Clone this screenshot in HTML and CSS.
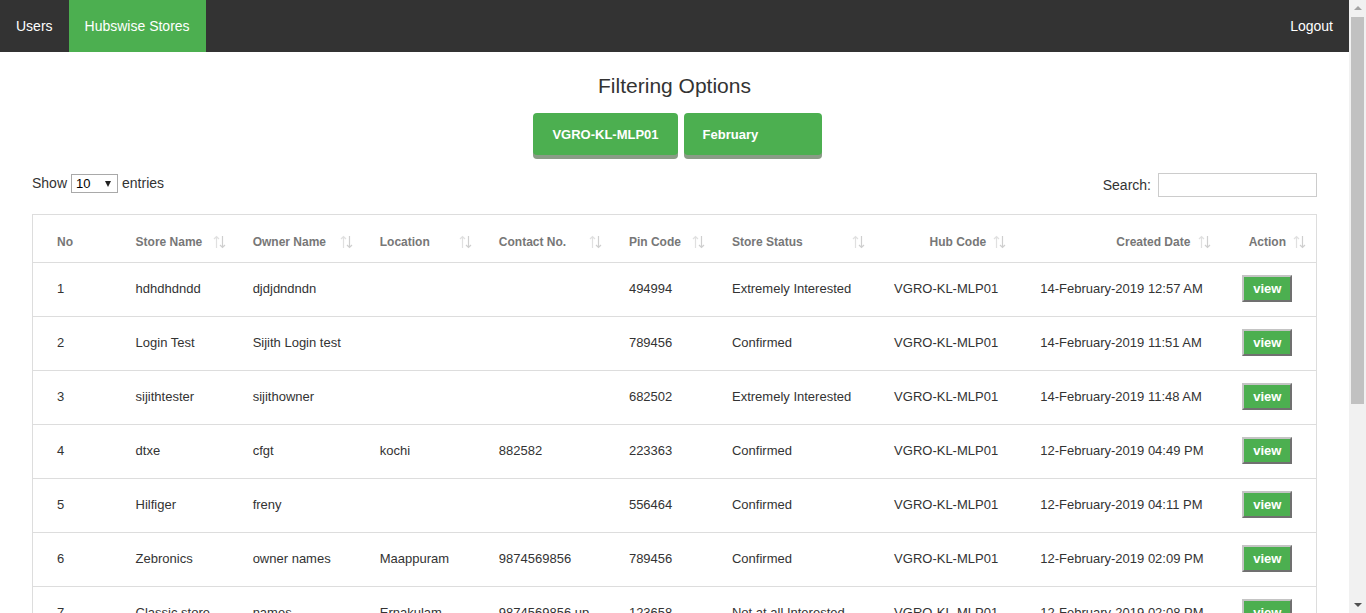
FILE: index.html
```html
<!DOCTYPE html>
<html lang="en">
<head>
<meta charset="utf-8">
<title>Hubswise Stores</title>
<link rel="stylesheet" href="styles.css">
</head>
<body>
<div class="viewport">
<nav class="topnav">
  <a class="nav-link" href="#">Users</a>
  <a class="nav-link active" href="#">Hubswise Stores</a>
  <a class="nav-link logout" href="#">Logout</a>
</nav>

<main class="page">
  <h2 class="title">Filtering Options</h2>
  <div class="filters">
    <button class="filter-btn">VGRO-KL-MLP01</button>
    <button class="filter-btn month">February</button>
  </div>

  <div class="controls">
    <label class="length">Show <span class="select-wrap"><select class="entries"><option>10</option><option>25</option><option>50</option></select></span> entries</label>
    <label class="search">Search: <input type="text" class="search-input"></label>
  </div>

  <table class="stores">
    <colgroup>
      <col class="c-no"><col class="c-store"><col class="c-owner"><col class="c-loc"><col class="c-contact"><col class="c-pin"><col class="c-status"><col class="c-hub"><col class="c-date"><col class="c-action">
    </colgroup>
    <thead>
      <tr>
        <th class="first plain">No</th>
        <th>Store Name<svg class="sort" viewBox="0 0 13 14" width="13" height="14"><path d="M3.5 1.5V13M1 4L3.5 1.5L6 4" class="up"/><path d="M9.5 1V12.5M7 10L9.5 12.5L12 10" class="down"/></svg></th>
        <th>Owner Name<svg class="sort" viewBox="0 0 13 14" width="13" height="14"><path d="M3.5 1.5V13M1 4L3.5 1.5L6 4" class="up"/><path d="M9.5 1V12.5M7 10L9.5 12.5L12 10" class="down"/></svg></th>
        <th>Location<svg class="sort" viewBox="0 0 13 14" width="13" height="14"><path d="M3.5 1.5V13M1 4L3.5 1.5L6 4" class="up"/><path d="M9.5 1V12.5M7 10L9.5 12.5L12 10" class="down"/></svg></th>
        <th>Contact No.<svg class="sort" viewBox="0 0 13 14" width="13" height="14"><path d="M3.5 1.5V13M1 4L3.5 1.5L6 4" class="up"/><path d="M9.5 1V12.5M7 10L9.5 12.5L12 10" class="down"/></svg></th>
        <th>Pin Code<svg class="sort" viewBox="0 0 13 14" width="13" height="14"><path d="M3.5 1.5V13M1 4L3.5 1.5L6 4" class="up"/><path d="M9.5 1V12.5M7 10L9.5 12.5L12 10" class="down"/></svg></th>
        <th class="h-status">Store Status<svg class="sort" viewBox="0 0 13 14" width="13" height="14"><path d="M3.5 1.5V13M1 4L3.5 1.5L6 4" class="up"/><path d="M9.5 1V12.5M7 10L9.5 12.5L12 10" class="down"/></svg></th>
        <th class="right h-hub">Hub Code<svg class="sort" viewBox="0 0 13 14" width="13" height="14"><path d="M3.5 1.5V13M1 4L3.5 1.5L6 4" class="up"/><path d="M9.5 1V12.5M7 10L9.5 12.5L12 10" class="down"/></svg></th>
        <th class="right h-date">Created Date<svg class="sort" viewBox="0 0 13 14" width="13" height="14"><path d="M3.5 1.5V13M1 4L3.5 1.5L6 4" class="up"/><path d="M9.5 1V12.5M7 10L9.5 12.5L12 10" class="down"/></svg></th>
        <th class="right h-action">Action<svg class="sort" viewBox="0 0 13 14" width="13" height="14"><path d="M3.5 1.5V13M1 4L3.5 1.5L6 4" class="up"/><path d="M9.5 1V12.5M7 10L9.5 12.5L12 10" class="down"/></svg></th>
      </tr>
    </thead>
    <tbody>
      <tr><td class="first">1</td><td>hdhdhdndd</td><td>djdjdndndn</td><td></td><td></td><td>494994</td><td>Extremely Interested</td><td>VGRO-KL-MLP01</td><td>14-February-2019 12:57 AM</td><td><button class="view-btn">view</button></td></tr>
      <tr><td class="first">2</td><td>Login Test</td><td>Sijith Login test</td><td></td><td></td><td>789456</td><td>Confirmed</td><td>VGRO-KL-MLP01</td><td>14-February-2019 11:51 AM</td><td><button class="view-btn">view</button></td></tr>
      <tr><td class="first">3</td><td>sijithtester</td><td>sijithowner</td><td></td><td></td><td>682502</td><td>Extremely Interested</td><td>VGRO-KL-MLP01</td><td>14-February-2019 11:48 AM</td><td><button class="view-btn">view</button></td></tr>
      <tr><td class="first">4</td><td>dtxe</td><td>cfgt</td><td>kochi</td><td>882582</td><td>223363</td><td>Confirmed</td><td>VGRO-KL-MLP01</td><td>12-February-2019 04:49 PM</td><td><button class="view-btn">view</button></td></tr>
      <tr><td class="first">5</td><td>Hilfiger</td><td>freny</td><td></td><td></td><td>556464</td><td>Confirmed</td><td>VGRO-KL-MLP01</td><td>12-February-2019 04:11 PM</td><td><button class="view-btn">view</button></td></tr>
      <tr><td class="first">6</td><td>Zebronics</td><td>owner names</td><td>Maappuram</td><td>9874569856</td><td>789456</td><td>Confirmed</td><td>VGRO-KL-MLP01</td><td>12-February-2019 02:09 PM</td><td><button class="view-btn">view</button></td></tr>
      <tr><td class="first">7</td><td>Classic store</td><td>names</td><td>Ernakulam</td><td>9874569856 up</td><td>123658</td><td>Not at all Interested</td><td>VGRO-KL-MLP01</td><td>12-February-2019 02:08 PM</td><td><button class="view-btn">view</button></td></tr>
      <tr><td class="first">8</td><td>Fresh Mart</td><td>anil</td><td>Aluva</td><td>9847012345</td><td>683101</td><td>Confirmed</td><td>VGRO-KL-MLP01</td><td>11-February-2019 05:32 PM</td><td><button class="view-btn">view</button></td></tr>
      <tr><td class="first">9</td><td>Green Basket</td><td>rahul</td><td>Kakkanad</td><td>9895123456</td><td>682030</td><td>Extremely Interested</td><td>VGRO-KL-MLP01</td><td>11-February-2019 03:15 PM</td><td><button class="view-btn">view</button></td></tr>
      <tr><td class="first">10</td><td>Daily Needs</td><td>suresh</td><td>Edappally</td><td>9746001122</td><td>682024</td><td>Confirmed</td><td>VGRO-KL-MLP01</td><td>10-February-2019 10:20 AM</td><td><button class="view-btn">view</button></td></tr>
    </tbody>
  </table>
</main>
</div>

<div class="scrollbar" aria-hidden="true">
  <div class="sb-arrow sb-up"></div>
  <div class="sb-track"><div class="sb-thumb"></div></div>
  <div class="sb-arrow sb-down"></div>
</div>
</body>
</html>
```
FILE: styles.css
```css
* { box-sizing: border-box; }

html, body {
  margin: 0;
  padding: 0;
}

body {
  font-family: "Liberation Sans", Arial, sans-serif;
  color: #333;
  background: #fff;
}

.viewport {
  width: 1349px;
}

.topnav {
  display: flex;
  height: 52px;
  background: #333;
}

.nav-link {
  display: flex;
  align-items: center;
  padding: 0 16px;
  color: #fff;
  font-size: 14px;
  text-decoration: none;
}

.nav-link.active {
  background: #4caf50;
}

.nav-link.logout {
  margin-left: auto;
}

.page {
  padding: 22px 32px 40px;
}

.title {
  margin: 0;
  text-align: center;
  font-size: 21px;
  font-weight: normal;
  line-height: 24px;
  color: #333;
}

.filters {
  display: flex;
  justify-content: center;
  gap: 6px;
  margin-top: 15px;
  padding-left: 6px;
}

.filter-btn {
  height: 42px;
  padding: 0 19px;
  border: none;
  border-radius: 4px;
  background: #4caf50;
  color: #fff;
  font-family: "Liberation Sans", Arial, sans-serif;
  font-size: 13px;
  font-weight: bold;
  box-shadow: 0 4px 0 #8a9c86;
  text-align: left;
}

.filter-btn.month {
  width: 138px;
}

.controls {
  display: flex;
  justify-content: space-between;
  align-items: flex-start;
  margin-top: 18px;
  font-size: 14px;
}

.length {
  display: flex;
  align-items: center;
  gap: 4px;
  height: 20px;
}

.select-wrap {
  position: relative;
  display: inline-block;
}

.select-wrap::after {
  content: "";
  position: absolute;
  right: 7px;
  top: 7px;
  border-left: 3.5px solid transparent;
  border-right: 3.5px solid transparent;
  border-top: 6px solid #222;
  pointer-events: none;
}

.entries {
  -webkit-appearance: none;
  appearance: none;
  width: 47px;
  height: 19px;
  padding: 0 0 0 4px;
  border: 1px solid #a9a9a9;
  border-radius: 0;
  background: #fff;
  color: #000;
  font-family: "Liberation Sans", Arial, sans-serif;
  font-size: 13px;
}

.search {
  display: flex;
  align-items: center;
  gap: 7px;
}

.search-input {
  width: 159px;
  height: 24px;
  border: 1px solid #ccc;
  padding: 2px 4px;
  font-size: 14px;
}

.stores {
  width: 100%;
  margin-top: 17px;
  border: 1px solid #ddd;
  border-collapse: collapse;
  table-layout: fixed;
  font-size: 13px;
}

.c-no { width: 85px; }
.c-store { width: 117px; }
.c-owner { width: 127px; }
.c-loc { width: 119px; }
.c-contact { width: 130px; }
.c-pin { width: 103px; }
.c-status { width: 162px; }
.c-hub { width: 146px; }
.c-date { width: 202px; }
.c-action { width: 92px; }

.stores th {
  position: relative;
  padding: 19px 32px 11px 18px;
  line-height: 17px;
  font-size: 12px;
  font-weight: bold;
  color: #777;
  text-align: left;
  white-space: nowrap;
  border-bottom: 1px solid #ddd;
}

.stores th.right {
  text-align: right;
}

.stores th.first,
.stores td.first {
  padding-left: 24px;
}

.sort {
  position: absolute;
  right: 9px;
  top: 20px;
  fill: none;
  stroke-width: 1.2;
}

.h-status .sort { right: 11px; }
.stores th.h-hub { padding-right: 36px; }
.h-hub .sort { right: 16px; }
.stores th.h-date { padding-right: 34px; }
.h-date .sort { right: 13px; }
.stores th.h-action { padding-right: 30px; }
.h-action .sort { right: 10px; }

.sort .up { stroke: #e0e0e0; }
.sort .down { stroke: #cfcfcf; }

.stores td {
  padding: 17px 18px 18px;
  line-height: 18px;
  border-top: 1px solid #ddd;
  white-space: nowrap;
  vertical-align: middle;
  color: #333;
}

.view-btn {
  display: block;
  width: 50px;
  height: 27px;
  margin: -5px 0 -4px;
  padding: 0;
  border: 2px outset #c4c4c4;
  background: #4caf50;
  color: #fff;
  font-family: "Liberation Sans", Arial, sans-serif;
  font-size: 13px;
  font-weight: bold;
}

.scrollbar {
  position: fixed;
  top: 0;
  right: 0;
  bottom: 0;
  width: 17px;
  display: flex;
  flex-direction: column;
  background: #f1f1f1;
}

.sb-arrow {
  position: relative;
  height: 17px;
  flex: none;
}

.sb-arrow::after {
  content: "";
  position: absolute;
  left: 5px;
  border-left: 4px solid transparent;
  border-right: 4px solid transparent;
}

.sb-up::after {
  top: 6px;
  border-bottom: 4px solid #a3a3a3;
}

.sb-down::after {
  top: 7px;
  border-top: 4px solid #505050;
}

.sb-track {
  flex: 1;
  padding: 0 2px;
}

.sb-thumb {
  height: 387px;
  background: #c1c1c1;
}
```
